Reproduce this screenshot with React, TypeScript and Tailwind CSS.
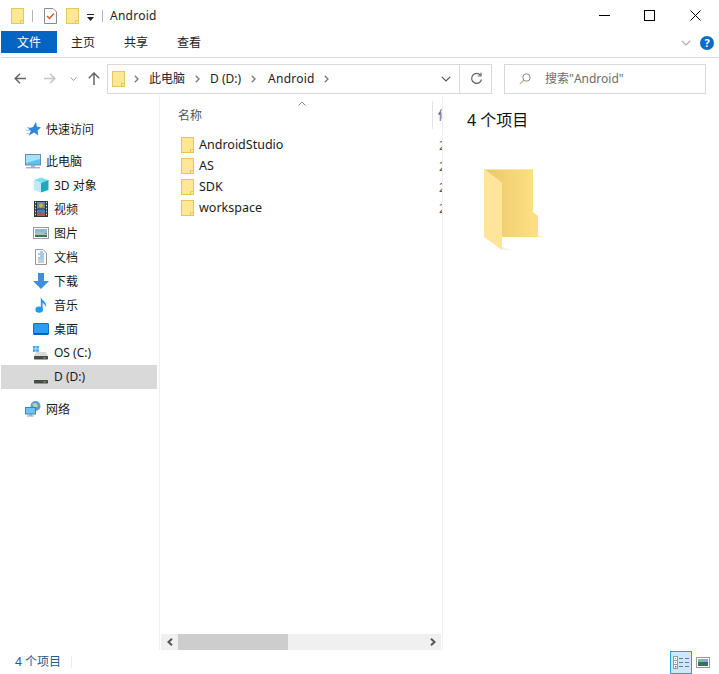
const FONT = "font-['Noto_Sans','Noto_Sans_CJK_SC',sans-serif]";

function SmallFolder() {
  return (
    <svg width="13" height="16" viewBox="0 0 13 16" className="shrink-0">
      <rect x="0.5" y="0.5" width="12" height="15" fill="#FFE794" stroke="#E8C75A" />
      <path d="M9.5 15.5 V12.5 H12.5" fill="none" stroke="#E8C75A" />
    </svg>
  );
}

function Chevron({ className = "" }: { className?: string }) {
  return (
    <svg width="5" height="8" viewBox="0 0 5 8" className={className}>
      <path d="M0.8 0.8 L4 4 L0.8 7.2" fill="none" stroke="#777" strokeWidth="1.3" />
    </svg>
  );
}

function DownChevron({ color = "#666", w = 10 }: { color?: string; w?: number }) {
  return (
    <svg width={w} height="6" viewBox="0 0 10 6">
      <path d="M0.8 0.8 L5 5 L9.2 0.8" fill="none" stroke={color} strokeWidth="1.2" />
    </svg>
  );
}

function Star() {
  return (
    <svg width="16" height="16" viewBox="0 0 16 16">
      <path d="M11 0.8 L11.8 5.6 L16 6.4 L12.6 9.4 L13.4 14.4 L9 11.6 L3.6 14.8 L5.8 9.8 L3 7.4 L8 6 Z" fill="#2E86DE" />
      <path d="M2 6.5 H5 M1 9.5 H5 M1.5 12.5 H5" stroke="#A6CFF0" strokeWidth="1" />
    </svg>
  );
}
function Monitor() {
  return (
    <svg width="16" height="15" viewBox="0 0 16 15">
      <rect x="0.5" y="0.5" width="15" height="10.5" fill="#5CC1F5" stroke="#6F8CA3" />
      <path d="M1 1 H15 V5 L1 9 Z" fill="#A6E1FB" />
      <rect x="6" y="11" width="4" height="2" fill="#9DB1C2" />
      <rect x="1" y="13" width="14" height="1.4" fill="#9DB1C2" />
    </svg>
  );
}
function Cube() {
  return (
    <svg width="16" height="16" viewBox="0 0 16 16">
      <path d="M8 0.5 L15.5 3 L8 6 L0.8 3 Z" fill="#7EE0EC" />
      <path d="M0.8 3 L8 6 V15.5 L0.8 13 Z" fill="#BDEDF2" />
      <path d="M8 6 L15.5 3 V13 L8 15.5 Z" fill="#22A8BE" />
    </svg>
  );
}
function Film() {
  return (
    <svg width="14" height="16" viewBox="0 0 14 16">
      <rect x="0" y="0" width="14" height="16" fill="#333" />
      <path d="M1 1.5 H2 M1 4.5 H2 M1 7.5 H2 M1 10.5 H2 M1 13.5 H2 M12 1.5 H13 M12 4.5 H13 M12 7.5 H13 M12 10.5 H13 M12 13.5 H13" stroke="#ddd" strokeWidth="1.4" />
      <rect x="3" y="1" width="8" height="6.5" fill="#5B8FB0" />
      <rect x="3" y="8.5" width="8" height="6.5" fill="#4C7FC0" />
      <circle cx="7" cy="4.4" r="2" fill="#E0B030" />
      <path d="M3 14 L6 10.5 L11 14 Z" fill="#B2552E" />
    </svg>
  );
}
function Picture() {
  return (
    <svg width="16" height="12" viewBox="0 0 16 12">
      <rect x="0.5" y="0.5" width="15" height="11" fill="#fff" stroke="#9A9A9A" />
      <rect x="2" y="2" width="12" height="4" fill="#8DB8DC" />
      <rect x="2" y="6" width="12" height="4" fill="#3F6E5E" />
      <path d="M2 6 L8 5 L14 7 V8 H2 Z" fill="#A9C4B5" />
    </svg>
  );
}
function Doc() {
  return (
    <svg width="12" height="16" viewBox="0 0 12 16">
      <path d="M0.5 0.5 H8 L11.5 4 V15.5 H0.5 Z" fill="#fff" stroke="#999" />
      <path d="M5 3 H8 M3 5 H9 M5 7 H9 M3 9 H9" stroke="#3D9BE0" strokeWidth="1" />
      <path d="M3 11 H9 M3 13 H9" stroke="#999" strokeWidth="1" />
    </svg>
  );
}
function Download() {
  return (
    <svg width="16" height="16" viewBox="0 0 16 16">
      <path d="M5 0 H11 V8 H16 L8 16 L0 8 H5 Z" fill="#3F8FDC" />
    </svg>
  );
}
function Note() {
  return (
    <svg width="12" height="16" viewBox="0 0 12 16">
      <ellipse cx="4.2" cy="12.6" rx="3.8" ry="3.2" fill="#1E9BEA" />
      <path d="M5.8 13 V0 C6.5 3.5 12.5 4.5 10.8 10 C10.4 8 8.8 6.6 7.6 6 V13 Z" fill="#1E9BEA" />
    </svg>
  );
}
function Desktop() {
  return (
    <svg width="16" height="12" viewBox="0 0 16 12">
      <rect x="0.5" y="0.5" width="15" height="11" rx="0.5" fill="#2E9BEE" stroke="#1A6FBC" />
      <rect x="1" y="10" width="14" height="1.5" fill="#0F5C9E" />
    </svg>
  );
}
function Drive({ os = false }: { os?: boolean }) {
  return (
    <svg width="16" height="14" viewBox="0 0 16 14">
      {os && (
        <g fill="#2AA9F0">
          <rect x="0" y="0" width="2.6" height="2.6" />
          <rect x="3.2" y="0" width="2.6" height="2.6" />
          <rect x="0" y="3.2" width="2.6" height="2.6" />
          <rect x="3.2" y="3.2" width="2.6" height="2.6" />
        </g>
      )}
      <path d="M3 6 H13 L15 10 H1 Z" fill="#DADADA" />
      <rect x="1" y="10" width="14" height="3.4" rx="0.6" fill="#4A4A4A" />
      <rect x="10.5" y="11.2" width="2" height="1.2" fill="#3FD34F" />
    </svg>
  );
}
function Network() {
  return (
    <svg width="16" height="16" viewBox="0 0 16 16">
      <circle cx="10.5" cy="5" r="5" fill="#5C9ECF" />
      <path d="M7 3 L11 2 L13 5 L10 7 Z" fill="#B6D7B0" />
      <rect x="0.5" y="6.5" width="10" height="6.5" fill="#69C4F5" stroke="#4B7FA6" />
      <rect x="4" y="13" width="3" height="1.6" fill="#8FA3B5" />
      <rect x="2" y="14.5" width="7" height="1" fill="#8FA3B5" />
    </svg>
  );
}

function Checklist() {
  return (
    <svg width="13" height="16" viewBox="0 0 13 16">
      <path d="M0.5 0.5 H9 L12.5 4 V15.5 H0.5 Z" fill="#fff" stroke="#8a8a8a" />
      <path d="M3 8 L5.5 10.5 L10 5.5" fill="none" stroke="#E2572B" strokeWidth="1.5" />
    </svg>
  );
}

function NavRow({ icon, label, indent, active, latin }: { icon: React.ReactNode; label: string; indent?: boolean; active?: boolean; latin?: boolean }) {
  return (
    <div className={`h-6 flex items-center ${indent ? "pl-[32px]" : "pl-[24px]"} ${active ? "bg-[#d9d9d9]" : ""}`}>
      <span className="w-[16px] mr-[5px] flex items-center justify-center shrink-0">{icon}</span>
      <span className={`text-[12px] text-[#1a1a1a] whitespace-nowrap ${latin ? "" : "pt-[2px]"}`}>{label}</span>
    </div>
  );
}

function FileRow({ name }: { name: string }) {
  return (
    <div className="h-[21px] flex items-center">
      <span className="w-[21px] ml-[21px] shrink-0 flex"><SmallFolder /></span>
      <span className="w-[240px] -ml-[3px] pt-[2px] shrink-0 text-[12.5px] text-[#1a1a1a]">{name}</span>
      <span className="pt-[2px] text-[12px] text-[#555] whitespace-nowrap">2021/5/1 10:00</span>
    </div>
  );
}

function BigFolder() {
  return (
    <svg width="62" height="84" viewBox="0 0 62 84" className="block">
      <defs>
        <linearGradient id="fb" x1="0" x2="1" y1="0" y2="0">
          <stop offset="0" stopColor="#E9C76B" />
          <stop offset="1" stopColor="#FFE184" />
        </linearGradient>
      </defs>
      <path d="M54 67 H60 L54 69 Z M18 78 L27 81 L18 81 Z" fill="#efefef" />
      <path d="M0 0 H49 V43 L54 47 V68 H18 V14 Z" fill="url(#fb)" />
      <path d="M0 0 H49 V1 H1.3 Z" fill="#FBE6A6" />
      <path d="M0 0 L18 14 V81 L0 68 Z" fill="#FFE59B" />
    </svg>
  );
}

export default function App() {
  return (
    <div className={`w-[719px] h-[674px] bg-white flex flex-col overflow-hidden ${FONT}`}>
      {/* title bar */}
      <div className="h-[31px] flex items-center shrink-0">
        <span className="ml-[11px] flex"><SmallFolder /></span>
        <span className="ml-[8px] w-px h-3 bg-[#b5b5b5]" />
        <span className="ml-[11px] flex"><Checklist /></span>
        <span className="ml-[9px] flex"><SmallFolder /></span>
        <svg width="7" height="8" viewBox="0 0 7 8" className="ml-[8px] mt-1">
          <path d="M0 0 H7 V1 H0 Z M0 3 H7 L3.5 7 Z" fill="#222" />
        </svg>
        <span className="ml-[8px] w-px h-3 bg-[#b5b5b5]" />
        <span className="ml-[7px] text-[12px] tracking-[0.25px] text-[#222]">Android</span>
        <div className="ml-auto flex items-center pr-[18px]">
          <span className="w-[11px] h-px bg-black" />
          <span className="ml-[34px] w-[11px] h-[11px] border border-black" />
          <svg width="11" height="11" viewBox="0 0 11 11" className="ml-[35px]">
            <path d="M0.5 0.5 L10.5 10.5 M10.5 0.5 L0.5 10.5" stroke="#000" strokeWidth="1" />
          </svg>
        </div>
      </div>
      {/* ribbon tabs */}
      <div className="h-[27px] ml-px flex border-b border-[#dadada] shrink-0">
        <div className="h-[22px] w-[56px] bg-[#0563c1] text-white text-[12px] flex items-center justify-center pt-[2px]">文件</div>
        <div className="h-[22px] ml-[14px] text-[12px] text-[#222] flex items-center pt-[2px]">主页</div>
        <div className="h-[22px] ml-[29px] text-[12px] text-[#222] flex items-center pt-[2px]">共享</div>
        <div className="h-[22px] ml-[29px] text-[12px] text-[#222] flex items-center pt-[2px]">查看</div>
        <div className="h-[22px] ml-auto pr-[3px] flex items-center pt-[2px]">
          <DownChevron color="#aaa" />
          <span className="ml-[9px] mr-[2px] w-[14px] h-[14px] rounded-full bg-[#0a6cc4] text-white text-[11px] font-bold flex items-center justify-center">?</span>
        </div>
      </div>
      {/* address row */}
      <div className="h-[37px] pt-[4px] flex items-center shrink-0">
        <svg width="12" height="11" viewBox="0 0 12 11" className="ml-[14px]">
          <path d="M6 0.8 L1.2 5.5 L6 10.2 M1.2 5.5 H12" fill="none" stroke="#666" strokeWidth="1.5" />
        </svg>
        <svg width="12" height="11" viewBox="0 0 12 11" className="ml-[18px]">
          <path d="M6 0.8 L10.8 5.5 L6 10.2 M10.8 5.5 H0" fill="none" stroke="#c4c4c4" strokeWidth="1.5" />
        </svg>
        <span className="ml-[14px] flex"><DownChevron color="#888" w={7} /></span>
        <svg width="12" height="13" viewBox="0 0 12 13" className="ml-[11px]">
          <path d="M0.8 6.2 L6 1 L11.2 6.2 M6 1 V13" fill="none" stroke="#666" strokeWidth="1.5" />
        </svg>
        <div className="ml-[7px] w-[385px] h-[30px] border border-[#d9d9d9] flex items-center text-[12px] text-[#222]">
          <span className="ml-[4px] flex"><SmallFolder /></span>
          <Chevron className="ml-[9px]" />
          <span className="ml-[10px]">此电脑</span>
          <Chevron className="ml-[10px]" />
          <span className="ml-[10px]">D (D:)</span>
          <Chevron className="ml-[10px]" />
          <span className="ml-[12px] tracking-[0.25px]">Android</span>
          <Chevron className="ml-[9px]" />
          <span className="ml-auto flex"><DownChevron color="#555" /></span>
          <span className="ml-[8px] w-px h-full bg-[#d9d9d9]" />
          <svg width="13" height="13" viewBox="0 0 13 13" className="ml-[10px] mr-[8px]">
            <path d="M10.5 3.2 A5 5 0 1 0 11.5 7.5" fill="none" stroke="#666" strokeWidth="1.2" />
            <path d="M11 0.8 V4 H7.8" fill="none" stroke="#666" strokeWidth="1.2" />
          </svg>
        </div>
        <div className="ml-[12px] w-[202px] h-[30px] border border-[#d9d9d9] flex items-center text-[12px] text-[#6d6d6d]">
          <svg width="12" height="12" viewBox="0 0 12 12" className="ml-[14px]">
            <circle cx="7.5" cy="4.5" r="3.7" fill="none" stroke="#8a8a8a" />
            <path d="M5 7 L0.8 11.2" stroke="#c9a98a" strokeWidth="1.1" />
          </svg>
          <span className="ml-[14px]">搜索"Android"</span>
        </div>
      </div>
      {/* main */}
      <div className="flex-1 min-h-0 flex">
        <nav className="w-[159px] ml-px shrink-0 border-r border-[#f0f0f0] pt-[22px]">
          <div className="w-[156px]">
            <NavRow icon={<Star />} label="快速访问" />
            <div className="h-2" />
            <NavRow icon={<Monitor />} label="此电脑" />
            <NavRow indent icon={<Cube />} label="3D 对象" />
            <NavRow indent icon={<Film />} label="视频" />
            <NavRow indent icon={<Picture />} label="图片" />
            <NavRow indent icon={<Doc />} label="文档" />
            <NavRow indent icon={<Download />} label="下载" />
            <NavRow indent icon={<Note />} label="音乐" />
            <NavRow indent icon={<Desktop />} label="桌面" />
            <NavRow indent latin icon={<Drive os />} label="OS (C:)" />
            <NavRow indent latin active icon={<Drive />} label="D (D:)" />
            <div className="h-2" />
            <NavRow icon={<Network />} label="网络" />
          </div>
        </nav>
        <section className="w-[283px] shrink-0 border-r border-[#f0f0f0] flex flex-col overflow-hidden">
          <div className="relative h-[38px] flex items-end shrink-0">
            <span className="ml-[18px] mb-[8px] w-[260px] shrink-0 text-[12px] text-[#555]">名称</span>
            <span className="mb-[8px] text-[12px] text-[#555] whitespace-nowrap">修改日期</span>
            <svg width="8" height="5" viewBox="0 0 8 5" className="absolute left-[138px] top-[6px]">
              <path d="M0.5 4.5 L4 1 L7.5 4.5" fill="none" stroke="#888" strokeWidth="1" />
            </svg>
            <span className="absolute left-[272px] top-[6px] w-px h-[28px] bg-[#e5e5e5]" />
          </div>
          <div className="pt-[1px] flex-1 min-h-0">
            <FileRow name="AndroidStudio" />
            <FileRow name="AS" />
            <FileRow name="SDK" />
            <FileRow name="workspace" />
          </div>
          <div className="h-[16px] ml-px mr-px bg-[#f0f0f0] flex items-center shrink-0">
            <span className="w-[17px] flex justify-center">
              <svg width="6" height="8" viewBox="0 0 6 8"><path d="M5 0.8 L1.5 4 L5 7.2" fill="none" stroke="#555" strokeWidth="2" /></svg>
            </span>
            <span className="w-[110px] h-full bg-[#cdcdcd]" />
            <span className="ml-auto w-[17px] flex justify-center">
              <svg width="6" height="8" viewBox="0 0 6 8"><path d="M1 0.8 L4.5 4 L1 7.2" fill="none" stroke="#555" strokeWidth="2" /></svg>
            </span>
          </div>
        </section>
        <aside className="flex-1 pl-[24px] pt-[14px]">
          <div className="text-[16px] leading-[22px] text-[#111]">4 个项目</div>
          <div className="mt-[38px] ml-[17px]"><BigFolder /></div>
        </aside>
      </div>
      {/* status */}
      <div className="h-[24px] flex items-center shrink-0">
        <span className="ml-[15px] text-[12px] text-[#2b5a86]">4 个项目</span>
        <span className="ml-[10px] w-px h-3 bg-[#ececec]" />
        <div className="ml-auto flex items-center pr-[9px]">
          <div className="w-[22px] h-[23px] border border-[#26a0da] bg-[#cce8ff] flex items-center justify-center">
            <svg width="16" height="13" viewBox="0 0 16 13">
              <rect x="0.5" y="0.5" width="4" height="12" fill="#fff" stroke="#999" />
              <path d="M0 4.5 H5 M0 8.5 H5" stroke="#999" />
              <rect x="2" y="2" width="1" height="1" fill="#888" />
              <rect x="2" y="6" width="1" height="1" fill="#888" />
              <rect x="2" y="10" width="1.4" height="1.4" fill="#c33" />
              <path d="M6 2.5 H10 M12 2.5 H16 M6 6.5 H10 M12 6.5 H16 M6 10.5 H10 M12 10.5 H16" stroke="#777" />
            </svg>
          </div>
          <span className="ml-[4px] flex">
            <svg width="14" height="11" viewBox="0 0 14 11">
              <rect x="0.5" y="0.5" width="13" height="10" fill="#fff" stroke="#999" />
              <rect x="2" y="2" width="10" height="3" fill="#7FB0D8" />
              <rect x="2" y="5" width="10" height="4" fill="#3F6E5E" />
            </svg>
          </span>
        </div>
      </div>
    </div>
  );
}
